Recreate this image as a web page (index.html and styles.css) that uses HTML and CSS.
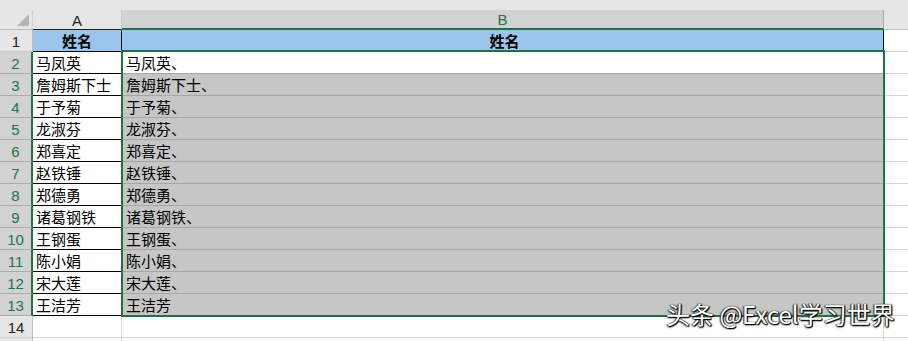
FILE: index.html
```html
<!DOCTYPE html>
<html lang="zh-CN">
<head>
<meta charset="utf-8">
<link rel="stylesheet" href="styles.css">
</head>
<body>
<div class="page">
  <div class="strip"></div>
  <div class="sheet">
    <div class="corner"><span class="tri"></span></div>
    <div class="colhdr">A</div>
    <div class="colhdr sel">B</div>
    <div class="colhdr last"></div>

    <div class="rowhdr">1</div>
    <div class="cell a head">姓名</div>
    <div class="cell b head">姓名</div>
    <div class="cell c"></div>

    <div class="rowhdr sel">2</div>
    <div class="cell a">马凤英</div>
    <div class="cell b active">马凤英、</div>
    <div class="cell c"></div>

    <div class="rowhdr sel">3</div>
    <div class="cell a">詹姆斯下士</div>
    <div class="cell b shade">詹姆斯下士、</div>
    <div class="cell c"></div>

    <div class="rowhdr sel">4</div>
    <div class="cell a">于予菊</div>
    <div class="cell b shade">于予菊、</div>
    <div class="cell c"></div>

    <div class="rowhdr sel">5</div>
    <div class="cell a">龙淑芬</div>
    <div class="cell b shade">龙淑芬、</div>
    <div class="cell c"></div>

    <div class="rowhdr sel">6</div>
    <div class="cell a">郑喜定</div>
    <div class="cell b shade">郑喜定、</div>
    <div class="cell c"></div>

    <div class="rowhdr sel">7</div>
    <div class="cell a">赵铁锤</div>
    <div class="cell b shade">赵铁锤、</div>
    <div class="cell c"></div>

    <div class="rowhdr sel">8</div>
    <div class="cell a">郑德勇</div>
    <div class="cell b shade">郑德勇、</div>
    <div class="cell c"></div>

    <div class="rowhdr sel">9</div>
    <div class="cell a">诸葛钢铁</div>
    <div class="cell b shade">诸葛钢铁、</div>
    <div class="cell c"></div>

    <div class="rowhdr sel">10</div>
    <div class="cell a">王钢蛋</div>
    <div class="cell b shade">王钢蛋、</div>
    <div class="cell c"></div>

    <div class="rowhdr sel">11</div>
    <div class="cell a">陈小娟</div>
    <div class="cell b shade">陈小娟、</div>
    <div class="cell c"></div>

    <div class="rowhdr sel">12</div>
    <div class="cell a">宋大莲</div>
    <div class="cell b shade">宋大莲、</div>
    <div class="cell c"></div>

    <div class="rowhdr sel">13</div>
    <div class="cell a">王洁芳</div>
    <div class="cell b shade">王洁芳</div>
    <div class="cell c"></div>

    <div class="rowhdr">14</div>
    <div class="cell e"></div>
    <div class="cell e"></div>
    <div class="cell c"></div>

    <div class="rowhdr"></div>
    <div class="cell e"></div>
    <div class="cell e"></div>
    <div class="cell c"></div>
  </div>
  <div class="selection"></div>
  <div class="watermark">头条 @Excel学习世界</div>
</div>
</body>
</html>
```
FILE: styles.css
```css
html, body {
  margin: 0;
  padding: 0;
  background: #ffffff;
  overflow: hidden;
}
.page {
  position: relative;
  width: 908px;
  height: 341px;
  overflow: hidden;
  font-family: "Noto Sans CJK SC", "Noto Sans", sans-serif;
}
.strip {
  height: 10px;
  background: #e6e6e6;
}
.sheet {
  display: grid;
  grid-template-columns: 33px 89px 762px 24px;
  grid-template-rows: 20px;
  grid-auto-rows: 22px;
}
.corner {
  background: #e6e6e6;
  border-right: 1px solid #d0d0d0;
  border-bottom: 1px solid #bdbdbd;
  display: flex;
  justify-content: flex-end;
  align-items: flex-end;
  padding: 0 3px 3px 0;
}
.tri {
  width: 0;
  height: 0;
  border-left: 12px solid transparent;
  border-bottom: 12px solid #b5b5b5;
}
.colhdr {
  background: #e6e6e6;
  border-right: 1px solid #c9c9c9;
  border-bottom: 1px solid #1e1e1e;
  font-family: "Liberation Sans", "Noto Sans", sans-serif;
  font-size: 15px;
  color: #222;
  display: flex;
  align-items: center;
  justify-content: center;
  padding-top: 1px;
}
.colhdr.sel {
  background: #d2d2d2;
  color: #217346;
  border-bottom: 2px solid #217346;
  border-right: 1px solid #a8a8a8;
}
.colhdr.last {
  border-bottom: 1px solid #bdbdbd;
  border-right: none;
}
.rowhdr {
  background: #e6e6e6;
  border-right: 1px solid #bdbdbd;
  border-bottom: 1px solid #c9c9c9;
  font-family: "Liberation Sans", "Noto Sans", sans-serif;
  font-size: 15px;
  color: #222;
  display: flex;
  align-items: center;
  justify-content: center;
  padding-top: 1px;
}
.rowhdr.sel {
  background: #d2d2d2;
  color: #217346;
  border-right: 2px solid #217346;
  border-bottom: 1px solid #ababab;
}
.cell {
  box-sizing: border-box;
  font-size: 15px;
  line-height: 21px;
  color: #000;
  padding-left: 3px;
  white-space: nowrap;
  overflow: hidden;
  border-right: 1px solid #d4d4d4;
  border-bottom: 1px solid #d4d4d4;
}
.cell.a {
  border-right: 1px solid #000;
  border-bottom: 1px solid #000;
}
.cell.head {
  background: #9bc5ea;
  font-weight: bold;
  text-align: center;
  padding-left: 0;
}
.cell.b.head {
  border-right: 1px solid #000;
  border-bottom: 1px solid #000;
}
.cell.b {
  padding-left: 4px;
}
.cell.active {
  background: #ffffff;
  border-bottom: 1px solid #a6a6a6;
}
.cell.shade {
  background: #c6c6c6;
  border-bottom: 1px solid #a6a6a6;
}
.cell.c {
  border-right: none;
}
.selection {
  position: absolute;
  left: 121px;
  top: 50px;
  width: 760px;
  height: 263px;
  border: 2px solid #217346;
}
.watermark {
  position: absolute;
  left: 666px;
  top: 299px;
  font-size: 24px;
  line-height: 30px;
  color: #ffffff;
  white-space: nowrap;
  text-shadow: 1px 1px 1px #000, -1px 0 1px #333, 0 1px 2px #000, 1px 0 1px #222;
}
```
